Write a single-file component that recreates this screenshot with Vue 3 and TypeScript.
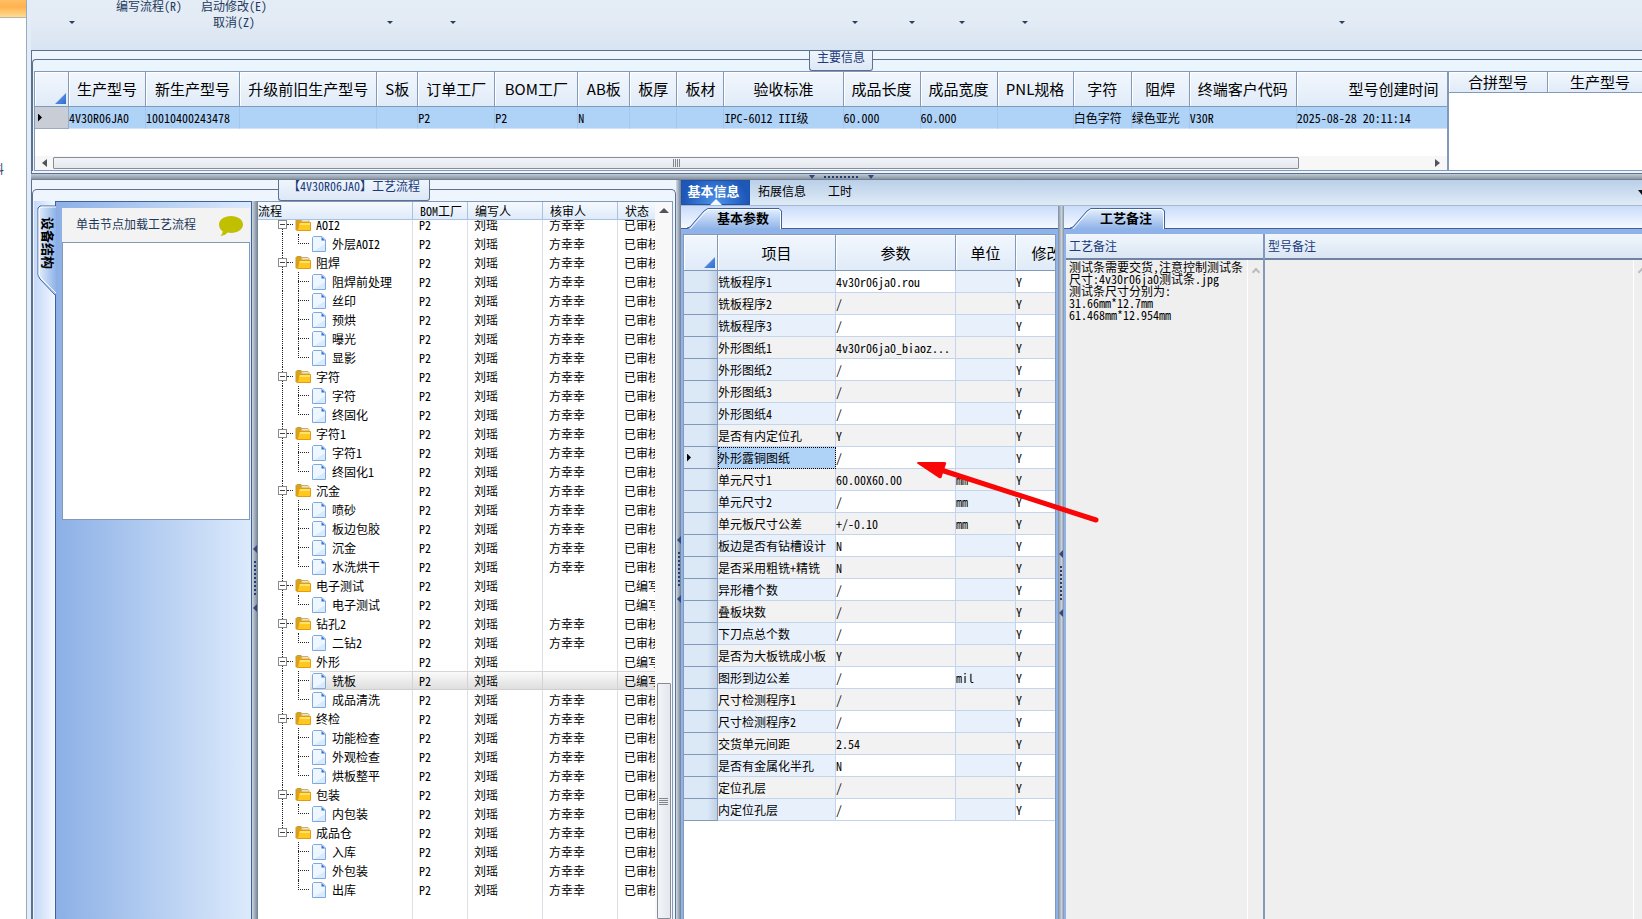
<script setup lang="ts">
interface Column {
  title: string
  width: number
  value?: string
}

interface TreeRow {
  name: string
  level: 0 | 1
  last: boolean
  reviewed: boolean
}

interface Param {
  name: string
  value: string
  unit: string
}

const mainColumns: Column[] = [
  { title: '生产型号', width: 77, value: '4V30R06JA0' },
  { title: '新生产型号', width: 94, value: '10010400243478' },
  { title: '升级前旧生产型号', width: 137 },
  { title: 'S板', width: 41 },
  { title: '订单工厂', width: 77, value: 'P2' },
  { title: 'BOM工厂', width: 83, value: 'P2' },
  { title: 'AB板', width: 52, value: 'N' },
  { title: '板厚', width: 47 },
  { title: '板材', width: 47 },
  { title: '验收标准', width: 119, value: 'IPC-6012 III级' },
  { title: '成品长度', width: 77, value: '60.000' },
  { title: '成品宽度', width: 77, value: '60.000' },
  { title: 'PNL规格', width: 76 },
  { title: '字符', width: 58, value: '白色字符' },
  { title: '阻焊', width: 58, value: '绿色亚光' },
  { title: '终端客户代码', width: 107, value: 'V30R' },
  { title: '型号创建时间', width: 194, value: '2025-08-28 20:11:14' },
]

const groups: [string, string[]][] = [
  ['AOI2', ['外层AOI2']],
  ['阻焊', ['阻焊前处理', '丝印', '预烘', '曝光', '显影']],
  ['字符', ['字符', '终固化']],
  ['字符1', ['字符1', '终固化1']],
  ['沉金', ['喷砂', '板边包胶', '沉金', '水洗烘干']],
  ['电子测试', ['电子测试']],
  ['钻孔2', ['二钻2']],
  ['外形', ['铣板', '成品清洗']],
  ['终检', ['功能检查', '外观检查', '烘板整平']],
  ['包装', ['内包装']],
  ['成品仓', ['入库', '外包装', '出库']],
]
const pending = ['电子测试', '外形', '铣板']

const treeRows: TreeRow[] = groups.flatMap(([name, steps], g) => [
  { name, level: 0 as const, last: g === groups.length - 1, reviewed: !pending.includes(name) },
  ...steps.map((step, i) => ({
    name: step,
    level: 1 as const,
    last: i === steps.length - 1,
    reviewed: !pending.includes(step),
  })),
])
const lastGroupStart = treeRows.length - groups[groups.length - 1][1].length

const params: Param[] = (
  [
    ['铣板程序1', '4v30r06ja0.rou'],
    ['铣板程序2', '/'],
    ['铣板程序3', '/'],
    ['外形图纸1', '4v30r06ja0_biaoz...'],
    ['外形图纸2', '/'],
    ['外形图纸3', '/'],
    ['外形图纸4', '/'],
    ['是否有内定位孔', 'Y'],
    ['外形露铜图纸', '/'],
    ['单元尺寸1', '60.00X60.00', 'mm'],
    ['单元尺寸2', '/', 'mm'],
    ['单元板尺寸公差', '+/-0.10', 'mm'],
    ['板边是否有钻槽设计', 'N'],
    ['是否采用粗铣+精铣', 'N'],
    ['异形槽个数', '/'],
    ['叠板块数', '/'],
    ['下刀点总个数', '/'],
    ['是否为大板铣成小板', 'Y'],
    ['图形到边公差', '/', 'mil'],
    ['尺寸检测程序1', '/'],
    ['尺寸检测程序2', '/'],
    ['交货单元间距', '2.54'],
    ['是否有金属化半孔', 'N'],
    ['定位孔层', '/'],
    ['内定位孔层', '/'],
  ] as string[][]
).map(([name, value, unit = '']) => ({ name, value, unit }))
const currentParam = '外形露铜图纸'

const note = `测试条需要交货,注意控制测试条尺寸:4v30r06ja0测试条.jpg
测试条尺寸分别为:
31.66mm*12.7mm
61.468mm*12.954mm`
</script>

<template>
  <div class="app">
    <aside class="dock">
      <div class="dock-active"></div>
      <span class="dock-label">料</span>
    </aside>

    <div class="main">
      <header class="ribbon">
        <button class="drop" aria-label="展开"><i class="caret"></i></button>
        <button class="cmd">编写流程(R)</button>
        <div class="cmd-stack">
          <button class="cmd">启动修改(E)</button>
          <button class="cmd">取消(Z)</button>
        </div>
        <button v-for="n in 7" :key="n" class="drop" :class="'drop-' + n" aria-label="展开">
          <i class="caret"></i>
        </button>
      </header>

      <section class="info">
        <h2 class="caption">主要信息</h2>
        <div class="info-frame">
          <div class="info-left">
            <table class="grid info-table">
              <colgroup>
                <col class="c-mark" />
                <col v-for="c in mainColumns" :key="c.title" :style="{ width: c.width + 'px' }" />
              </colgroup>
              <thead>
                <tr>
                  <th class="corner"><i></i></th>
                  <th v-for="c in mainColumns" :key="c.title">{{ c.title }}</th>
                </tr>
              </thead>
              <tbody>
                <tr>
                  <td class="mark"><i class="pointer"></i></td>
                  <td v-for="c in mainColumns" :key="c.title">{{ c.value }}</td>
                </tr>
              </tbody>
            </table>
            <div class="hbar">
              <i class="tri tri-left"></i>
              <div class="hthumb"><i class="vgrip"></i></div>
              <i class="tri tri-right"></i>
            </div>
          </div>
          <div class="info-right">
            <table class="grid merge-table">
              <thead>
                <tr>
                  <th>合拼型号</th>
                  <th>生产型号</th>
                </tr>
              </thead>
            </table>
          </div>
        </div>
      </section>

      <div class="hsplit"><i class="down"></i><i class="hdots"></i><i class="down"></i></div>

      <div class="lower">
        <section class="flow">
          <h2 class="caption">【4V30R06JA0】工艺流程</h2>
          <div class="flow-frame">
            <div class="device">
              <div class="device-tabs">
                <button class="vtab">
                  <svg viewBox="0 0 19 91" width="19" height="91" aria-hidden="true">
                    <defs>
                      <linearGradient id="vt" x1="0" x2="1" y1="0" y2="0">
                        <stop offset="0" stop-color="#e4effd" />
                        <stop offset="1" stop-color="#8fb3e8" />
                      </linearGradient>
                    </defs>
                    <path d="M19 1H3L1 3V70L3 74L19 90Z" fill="url(#vt)" />
                    <path d="M19 1H3L1 3V70L3 74L18 90" fill="none" stroke="#3f619c" />
                    <path d="M19 2H4L2 4V70L4 73L19 88" fill="none" stroke="#fff" />
                  </svg>
                  <span>设备结构</span>
                </button>
              </div>
              <div class="device-body">
                <div class="hint">
                  <span>单击节点加载工艺流程</span>
                  <svg viewBox="0 0 26 22" width="26" height="22" aria-hidden="true">
                    <path
                      d="M13 1C20 1 25 5 25 9.500S20 18 13 18C11.800 18 10.800 17.900 9.800 17.600C8 19.400 5.500 21 2.500 21C4 19.500 4.500 18 4.700 16.300C2.300 14.700 1 12.500 1 9.500C1 5 6 1 13 1Z"
                      fill="#c0c000"
                    />
                  </svg>
                </div>
                <div class="device-list"></div>
              </div>
            </div>

            <div class="vsplit vsplit-a"><i class="left"></i><i class="vdots"></i><i class="left"></i></div>

            <div class="tree">
              <div class="tree-view">
                <table class="tree-head">
                  <colgroup>
                    <col class="t1" /><col class="t2" /><col class="t3" /><col class="t3" /><col class="t3" />
                  </colgroup>
                  <thead>
                    <tr>
                      <th>流程</th>
                      <th>BOM工厂</th>
                      <th>编写人</th>
                      <th>核审人</th>
                      <th>状态</th>
                    </tr>
                  </thead>
                </table>
                <div class="tree-scroll">
                  <table class="tree-body">
                    <colgroup>
                      <col class="t1" /><col class="t2" /><col class="t3" /><col class="t3" /><col class="t3" />
                    </colgroup>
                    <tbody>
                      <tr v-for="(r, i) in treeRows" :key="i" :class="{ selected: r.name === '铣板' }">
                        <td>
                          <div class="node">
                            <span
                              class="rail"
                              :class="{ half: i === lastGroupStart - 1, none: i >= lastGroupStart }"
                            ></span>
                            <template v-if="r.level === 0">
                              <button class="toggle" aria-label="折叠"></button>
                              <span class="stub"></span>
                              <svg class="folder" viewBox="0 0 17 15" width="17" height="15" aria-hidden="true">
                                <path d="M1 2.500L2 1.500H6L7 2.500H12V13H1Z" fill="#d9a21b" stroke="#c99a3a" />
                                <path d="M7 2.500H13L14 3.500V5H6Z" fill="#f3e3b5" stroke="#c9b070" />
                                <path d="M4 5.500H15.500V13.500H2.500Z" fill="#ffc81e" stroke="#e79a10" />
                                <path d="M5 7H15" stroke="#ffe46b" stroke-width="2" />
                              </svg>
                            </template>
                            <template v-else>
                              <span class="branch" :class="{ end: r.last }"></span>
                              <svg class="doc" viewBox="0 0 14 16" width="14" height="16" aria-hidden="true">
                                <path d="M1.500 .5H10L13.500 4V15.500H.5V1.500Z" fill="#eef6ff" stroke="#7fa9de" />
                                <path d="M2 15L13 8V15Z" fill="#d8eafd" />
                                <path d="M9.500 1V4.500H13Z" fill="#2f6fd6" />
                              </svg>
                            </template>
                            <span class="label">{{ r.name }}</span>
                          </div>
                        </td>
                        <td>P2</td>
                        <td>刘瑶</td>
                        <td>{{ r.reviewed ? '方幸幸' : '' }}</td>
                        <td>{{ r.reviewed ? '已审核' : '已编写' }}</td>
                      </tr>
                      <tr class="filler"><td></td><td></td><td></td><td></td><td></td></tr>
                    </tbody>
                  </table>
                </div>
              </div>
              <div class="vbar">
                <i class="tri tri-up"></i>
                <div class="vthumb"><i class="hgrip"></i></div>
              </div>
            </div>
          </div>
        </section>

        <div class="vsplit vsplit-b"><i class="left"></i><i class="vdots"></i><i class="left"></i></div>

        <section class="detail">
          <nav class="tabs">
            <button class="active">基本信息</button>
            <button>拓展信息</button>
            <button>工时</button>
            <i class="more"></i>
          </nav>
          <div class="panes">
            <div class="pane pane-params">
              <div class="strip">
                <button class="tab">
                  <svg viewBox="0 0 96 21" width="96" height="21" aria-hidden="true">
                    <defs>
                      <linearGradient id="ht" x1="0" x2="0" y1="0" y2="1">
                        <stop offset="0" stop-color="#e4effd" />
                        <stop offset="1" stop-color="#8fb3e8" />
                      </linearGradient>
                    </defs>
                    <path d="M1 21L17 3L21 1H92L94 3V21Z" fill="url(#ht)" />
                    <path d="M0 20L3 19L17 3L21 .5H92L94.500 3V20" fill="none" stroke="#3f619c" />
                    <path d="M3 21L18 4L21 1.500H91L93.500 4V21" fill="none" stroke="#fff" />
                  </svg>
                  <span>基本参数</span>
                </button>
              </div>
              <div class="param-view">
                <table class="grid param-table">
                  <colgroup>
                    <col class="p0" /><col class="p1" /><col class="p2" /><col class="p3" /><col class="p4" />
                  </colgroup>
                  <thead>
                    <tr>
                      <th class="corner"><i></i></th>
                      <th>项目</th>
                      <th>参数</th>
                      <th>单位</th>
                      <th>修改</th>
                    </tr>
                  </thead>
                  <tbody>
                    <tr v-for="p in params" :key="p.name" :class="{ current: p.name === currentParam }">
                      <td class="mark"><i v-if="p.name === currentParam" class="pointer"></i></td>
                      <td class="fixed">{{ p.name }}</td>
                      <td>{{ p.value }}</td>
                      <td class="fixed">{{ p.unit }}</td>
                      <td>Y</td>
                    </tr>
                  </tbody>
                </table>
              </div>
            </div>

            <div class="vsplit vsplit-c"><i class="left"></i><i class="vdots"></i><i class="left"></i></div>

            <div class="pane pane-notes">
              <div class="strip">
                <button class="tab">
                  <svg viewBox="0 0 96 21" width="96" height="21" aria-hidden="true">
                    <path d="M1 21L17 3L21 1H92L94 3V21Z" fill="url(#ht)" />
                    <path d="M0 20L3 19L17 3L21 .5H92L94.500 3V20" fill="none" stroke="#3f619c" />
                    <path d="M3 21L18 4L21 1.500H91L93.500 4V21" fill="none" stroke="#fff" />
                  </svg>
                  <span>工艺备注</span>
                </button>
              </div>
              <div class="notes">
                <div class="note note-process">
                  <label for="process-note">工艺备注</label>
                  <div class="note-box">
                    <textarea id="process-note" readonly :value="note"></textarea>
                    <span class="note-bar"><i></i></span>
                  </div>
                </div>
                <div class="note note-model">
                  <label for="model-note">型号备注</label>
                  <div class="note-box">
                    <textarea id="model-note" readonly></textarea>
                    <span class="note-bar"><i></i></span>
                  </div>
                </div>
              </div>
            </div>
          </div>
        </section>
      </div>
    </div>

    <svg class="arrow" viewBox="0 0 186 66" width="186" height="66" aria-hidden="true">
      <path d="M26 10L181 60" stroke="#f90606" stroke-width="5" stroke-linecap="round" />
      <path d="M3 2Q1 3 3 4L24 18Q27 19 27 16L31 4Q32 2 29 2Z" fill="#f90606" />
    </svg>
  </div>
</template>

<style>
body {
  margin: 0;
  overflow: hidden;
}
</style>

<style scoped>
.app {
  position: relative;
  display: flex;
  height: 100vh;
  overflow: hidden;
  background: #fff;
  color: #000;
  font: 12px/14px 'Noto Sans Mono CJK SC', 'Noto Sans CJK SC', sans-serif;
}
.app *,
.app *::before,
.app *::after {
  box-sizing: border-box;
}
button {
  margin: 0;
  padding: 0;
  border: 0;
  background: none;
  color: inherit;
  font: inherit;
  white-space: nowrap;
}
i {
  display: block;
  flex: none;
}
table {
  border-collapse: separate;
  border-spacing: 0;
  table-layout: fixed;
}
th,
td {
  padding: 0;
  overflow: hidden;
  white-space: nowrap;
  text-align: left;
  font-weight: 400;
}

.dock {
  flex: none;
  width: 31px;
  overflow: hidden;
  border-right: 4px solid #e3edf8;
  box-shadow: inset -1px 0 #9aaac0;
}
.dock-active {
  width: 26px;
  height: 18px;
  border-bottom: 1px solid #b9b3a8;
  background: linear-gradient(#ffbf66, #ffb24d 40%, #ffdc92);
}
.dock-label {
  display: block;
  width: 4px;
  margin-top: 144px;
  direction: rtl;
  overflow: hidden;
  color: #1e395b;
}
.main {
  display: flex;
  flex: 1;
  flex-direction: column;
  min-width: 0;
}

.ribbon {
  display: flex;
  flex: none;
  height: 50px;
  color: #1e395b;
  background: linear-gradient(#e4ecf6, #e3ebf5 40%, #d7e4f1);
}
.ribbon .drop {
  display: flex;
  justify-content: center;
  flex: none;
  width: 40px;
  height: 24px;
  padding-top: 21px;
  margin-left: 21px;
}
.caret {
  border: 3px solid transparent;
  border-top-color: #2a3f5f;
  border-bottom: 0;
}
.cmd {
  display: block;
  flex: none;
  height: 12px;
  line-height: 12px;
}
.ribbon > .cmd {
  margin-left: 24px;
}
.cmd-stack {
  flex: none;
  display: flex;
  flex-direction: column;
  align-items: center;
  gap: 4px;
  width: 66px;
  margin: 0 82px 0 19px;
}
.ribbon .drop-2 { margin-left: 23px; }
.ribbon .drop-3 { margin-left: 362px; }
.ribbon .drop-4 { margin-left: 17px; }
.ribbon .drop-5 { margin-left: 10px; }
.ribbon .drop-6 { margin-left: 23px; }
.ribbon .drop-7 { margin-left: 277px; }

.caption {
  position: absolute;
  top: 0;
  left: 50%;
  margin: 0;
  height: 20px;
  padding: 0 7px;
  transform: translateX(-50%);
  border: 1px solid #5d708f;
  border-top: 0;
  border-radius: 0 0 3px 3px;
  background: linear-gradient(#eef5fd, #dde8f5);
  color: #20397a;
  font-size: 12px;
  font-weight: 400;
  line-height: 12px;
  white-space: nowrap;
}
.info {
  position: relative;
  flex: none;
  width: calc(100% + 9px);
  height: 124px;
  padding-top: 8px;
  border: 1px solid #5d708f;
  background: #eef5fd;
}
.info-frame {
  display: flex;
  height: 112px;
  padding: 11px 0 0 1px;
  border: 1px solid #5d708f;
  border-right: 0;
  border-bottom: 0;
  border-radius: 4px 0 0 0;
  background: #ebf5fd;
}
.info-left {
  flex: none;
  width: 1415px;
  height: 100px;
  overflow: hidden;
  display: flex;
  flex-direction: column;
  border: 1px solid #8299b9;
  border-right-width: 2px;
  background: #fff;
}
.info-right {
  flex: 1;
  overflow: hidden;
  border: 1px solid #8299b9;
  border-left: 0;
  background: #fff;
}
.grid th {
  height: 35px;
  border-right: 1px solid #8299b9;
  border-bottom: 1px solid #8299b9;
  background: linear-gradient(#f2f7fd, #e0ebf8);
  box-shadow: inset 1px 1px #fff;
  font-family: 'Noto Sans CJK SC', sans-serif;
  font-size: 15px;
  text-align: center;
}
.grid th.corner {
  vertical-align: bottom;
}
.corner i {
  width: 11px;
  height: 11px;
  margin: 0 2px 2px auto;
  background: linear-gradient(135deg, #6fa0ea, #2f6fd0);
  clip-path: polygon(100% 0, 100% 100%, 0 100%);
}
.pointer {
  margin-left: 3px;
  width: 4px;
  height: 8px;
  background: #000;
  clip-path: polygon(0 0, 100% 50%, 0 100%);
}
.info-table {
  flex: none;
  width: 1456px;
}
.c-mark {
  width: 34px;
}
.info-table td {
  height: 22px;
  border-right: 1px solid #a3c6ee;
  border-bottom: 1px solid #d3e3f5;
  background: #afd2f7;
}
.info-table td.mark {
  border-color: #9aabc2;
  background: #c9ced6;
}
.merge-table {
  width: 204px;
}
.merge-table th {
  height: 21px;
  line-height: 20px;
}
.merge-table th:first-child {
  width: 99px;
}
.hbar {
  display: flex;
  align-items: center;
  flex: none;
  height: 14px;
  margin-top: auto;
  padding: 0 7px 1px;
  background: #f7f7f7;
}
.tri {
  border: 4px solid transparent;
}
.tri-left {
  border-right: 5px solid #50555c;
  border-left: 0;
}
.tri-right {
  margin-left: auto;
  border-left: 5px solid #50555c;
  border-right: 0;
}
.tri-up {
  border-width: 0 5px 5px;
  border-bottom-color: #50555c;
}
.hthumb {
  display: flex;
  align-items: center;
  width: 1246px;
  height: 12px;
  margin-left: 6px;
  border: 1px solid #878d96;
  border-radius: 1px;
  background: linear-gradient(#f2f4f7, #e3e8ee);
}
.vgrip {
  width: 7px;
  height: 8px;
  margin: 0 auto;
  background: repeating-linear-gradient(90deg, #80868e 0 1px, transparent 1px 2px);
}

.hsplit {
  display: flex;
  align-items: center;
  gap: 9px;
  flex: none;
  height: 6px;
  padding-left: 778px;
  border-bottom: 1px solid #76818e;
  background: linear-gradient(#c2cbd6, #8794a3);
}
.down {
  border: 3px solid transparent;
  border-top: 4px solid #34497a;
  border-bottom: 0;
}
.hdots {
  width: 35px;
  height: 2px;
  background: repeating-linear-gradient(90deg, #263c73 0 2px, transparent 2px 4px);
}
.lower {
  display: flex;
  flex: 1;
  min-height: 0;
}

.flow {
  position: relative;
  display: flex;
  flex: none;
  width: 645px;
  padding-top: 9px;
  border-left: 1px solid #5d708f;
  background: #eef5fd;
}
.flow .caption {
  height: 21px;
  padding: 0 9px;
}
.flow-frame {
  display: flex;
  width: 100%;
  min-height: 0;
  padding: 11px 2px 0 1px;
  border: 1px solid #5d708f;
  border-bottom: 0;
  border-radius: 5px 5px 0 0;
}
.device {
  display: flex;
  flex: none;
  width: 218px;
  border-right: 1px solid #3f619c;
}
.device-tabs {
  flex: none;
  width: 21px;
  padding: 4px 0 0 3px;
  background: linear-gradient(90deg, #c5d9f8, #f1f7ff);
}
.vtab {
  position: relative;
  display: flex;
  align-items: flex-start;
  justify-content: center;
  width: 19px;
  height: 91px;
  padding: 12px 0 0 3px;
}
.vtab svg {
  position: absolute;
  inset: 0;
}
.vtab span {
  position: relative;
  writing-mode: vertical-rl;
  text-orientation: sideways;
  font-size: 13px;
  font-weight: 700;
  line-height: 14px;
}
.device-body {
  flex: 1;
  padding: 6px 1px 0 6px;
  border-top: 1px solid #3f619c;
  border-left: 1px solid #3f619c;
  background: linear-gradient(90deg, #8cb0e6, #dceafc);
}
.hint {
  display: flex;
  align-items: center;
  justify-content: space-between;
  height: 34px;
  padding: 0 6px 2px 14px;
  background: #f3f3f3;
  color: #1e395b;
}
.hint svg {
  margin-top: 4px;
}
.device-list {
  height: 278px;
  border: 1px solid #8299b9;
  background: #fff;
}

.vsplit {
  display: flex;
  flex: none;
  flex-direction: column;
  align-items: center;
  gap: 8px;
}
.vsplit-a {
  width: 6px;
  padding-top: 344px;
  background: linear-gradient(90deg, #cdd6e0, #6f7f92);
}
.vsplit-b {
  width: 5px;
  padding-top: 356px;
  background: linear-gradient(90deg, #d3dbe4, #6f7f92);
}
.vsplit-c {
  width: 6px;
  padding-top: 344px;
  background: linear-gradient(90deg, #7f8d9e, #c9d2dd 60%, #7f8d9e);
}
.left {
  border: 4px solid transparent;
  border-right: 4px solid #34497a;
  border-left: 0;
}
.vdots {
  width: 2px;
  height: 35px;
  background: repeating-linear-gradient(#263c73 0 2px, transparent 2px 4px);
}

.tree {
  display: flex;
  flex: 1;
  min-width: 0;
  border: 1px solid #8299b9;
  border-width: 1px 1px 0 0;
  background: #fff;
}
.tree-view {
  display: flex;
  flex-direction: column;
  flex: 1;
  min-width: 0;
  overflow: hidden;
}
.tree-head,
.tree-body {
  flex: none;
  width: 435px;
}
.t1 { width: 155px; }
.t2 { width: 55px; }
.t3 { width: 75px; }
.tree-head th {
  height: 18px;
  padding-left: 7px;
  border-right: 1px solid #a9c2e2;
  border-bottom: 1px solid #a9c2e2;
  background: linear-gradient(#f5f9fe, #dfebf9);
  line-height: 12px;
}
.tree-head th:first-child {
  padding: 0;
}
.tree-scroll {
  flex: 1;
  min-height: 0;
  overflow: hidden;
}
.tree-body {
  margin-top: -5px;
}
.tree-body td {
  height: 19px;
  padding-left: 6px;
  border-right: 1px solid #dcdfe4;
}
.tree-body td:first-child {
  padding: 0;
}
.tree-body .selected td {
  border-right-color: #d4d4d4;
  background: linear-gradient(#d6d6d6 0 1px, #fafafa 1px, #dedede 18px, #cfcfcf 18px);
}
.tree-body .selected td:first-child {
  background-position: 52px 0;
  background-repeat: no-repeat;
}
.tree-body .filler td {
  height: 60px;
}
.node {
  position: relative;
  display: flex;
  align-items: center;
  height: 19px;
  padding-left: 20px;
}
.rail {
  position: absolute;
  top: 0;
  left: 24px;
  height: 19px;
  border-left: 1px dotted #222;
}
.rail.half { height: 9px; }
.rail.none { display: none; }
.toggle {
  position: relative;
  flex: none;
  width: 9px;
  height: 9px;
  border: 1px solid #8a8a8a;
  background: linear-gradient(#444, #444) center / 5px 1px no-repeat #fff;
}
.stub {
  width: 6px;
  margin-right: 2px;
  border-top: 1px dotted #222;
}
.folder {
  flex: none;
  margin-right: 4px;
}
.branch {
  position: relative;
  flex: none;
  align-self: stretch;
  width: 11px;
  margin: 0 3px 0 20px;
  background: repeating-linear-gradient(90deg, #222 0 1px, transparent 1px 2px) 0 9px / 100% 1px no-repeat;
}
.branch::before {
  content: '';
  position: absolute;
  top: 0;
  bottom: 0;
  left: 0;
  border-left: 1px dotted #222;
}
.branch.end::before {
  bottom: 9px;
}
.doc {
  flex: none;
  margin-right: 6px;
}
.vbar {
  display: flex;
  flex-direction: column;
  align-items: center;
  flex: none;
  width: 17px;
  padding-top: 6px;
  background: #f8f8f8;
}
.vthumb {
  display: flex;
  align-items: center;
  width: 14px;
  flex: 1;
  margin-top: 470px;
  border: 1px solid #878d96;
  border-radius: 1px;
  background: linear-gradient(90deg, #f2f4f7, #e3e8ee);
}
.hgrip {
  width: 9px;
  height: 7px;
  margin: 0 auto;
  background: repeating-linear-gradient(#80868e 0 1px, transparent 1px 2px);
}

.detail {
  display: flex;
  flex: 1;
  flex-direction: column;
  min-width: 0;
}
.tabs {
  display: flex;
  flex: none;
  height: 26px;
  border-bottom: 1px solid #a9b9ca;
  background: linear-gradient(#b9cfe8, #e0ebf7);
}
.tabs button {
  padding-bottom: 3px;
  margin-right: 22px;
}
.tabs .active {
  position: relative;
  width: 69px;
  padding-right: 4px;
  margin-right: 8px;
  border: 1px solid #1f52a8;
  background: radial-gradient(circle at 50% 100%, #4f94ea, #1d57b8 80%);
  color: #fff;
  font-size: 13px;
  font-weight: 700;
}
.tabs .active::after {
  content: '';
  position: absolute;
  bottom: -1px;
  left: 50%;
  border: 6px solid transparent;
  border-top: 0;
  border-bottom-color: #f2f8ff;
  transform: translateX(-50%);
}
.more {
  margin: 10px -4px 0 auto;
  border: 4px solid transparent;
  border-top: 5px solid #111;
  border-bottom: 0;
  height: 5px;
}
.panes {
  display: flex;
  flex: 1;
  min-height: 0;
}
.pane {
  display: flex;
  flex-direction: column;
  min-width: 0;
  background: #8fb3e8;
}
.pane-params {
  flex: none;
  width: 377px;
}
.pane-notes {
  flex: 1;
}
.strip {
  flex: none;
  height: 23px;
  padding: 2px 0 0 6px;
  border-bottom: 1px solid #3f619c;
  background: linear-gradient(#c9dcfb, #f5f9ff);
}
.tab {
  position: relative;
  display: block;
  width: 96px;
  height: 21px;
  padding-bottom: 2px;
  font-size: 13px;
  font-weight: 700;
  text-align: left;
}
.tab svg {
  position: absolute;
  top: 0;
  left: 0;
}
.tab span {
  position: relative;
  padding-left: 30px;
}
.param-view {
  flex: 1;
  min-height: 0;
  margin: 5px 2px 0 2px;
  overflow: hidden;
  border: 1px solid #8299b9;
  border-bottom: 0;
  background: #fff;
}
.param-table {
  width: 394px;
}
.p0 { width: 34px; }
.p1 { width: 118px; }
.p2 { width: 120px; }
.p3 { width: 60px; }
.p4 { width: 62px; }
.param-table th {
  height: 36px;
}
.param-table td {
  height: 22px;
  border-right: 1px solid #c3d5ec;
  border-bottom: 1px solid #c3d5ec;
  background: #fff;
}
.param-table td.fixed {
  background: #e8f1fb;
}
.param-table tr:nth-child(even) td {
  background: #f2f2f2;
}
.param-table tr td.mark {
  border-color: #8299b9;
  background: linear-gradient(90deg, #dbe8f6 70%, #c0cfe3);
}
.param-table tr.current td:nth-child(2) {
  background: #afd2f7;
  outline: 1px dotted #000;
  outline-offset: -1px;
}

.notes {
  display: flex;
  flex: 1;
  min-height: 0;
  margin: 5px 0 0 2px;
}
.note {
  display: flex;
  flex-direction: column;
}
.note-process {
  flex: none;
  width: 199px;
  border-right: 2px solid #8299b9;
}
.note-model {
  flex: 1;
}
.note label {
  flex: none;
  height: 26px;
  padding-left: 3px;
  border-bottom: 2px solid #6f84a4;
  background: linear-gradient(#f1f6fc, #d9e6f3);
  color: #20397a;
  line-height: 24px;
}
.note-box {
  display: flex;
  flex: 1;
  min-height: 0;
  background: #efefef;
}
textarea {
  flex: 1;
  min-width: 0;
  margin: 0;
  padding: 1px 0 0 3px;
  border: 0;
  outline: 0;
  overflow: hidden;
  resize: none;
  background: transparent;
  color: #000;
  font: inherit;
  line-height: 12px;
  word-break: break-all;
}
.note-bar {
  flex: none;
  width: 16px;
  padding: 9px 0 0 5px;
  border-left: 1px solid #fff;
}
.note-model .note-bar {
  width: 9px;
}
.note-bar i {
  width: 6px;
  height: 6px;
  border: 2px solid #bcbcbc;
  border-width: 2px 0 0 2px;
  transform: rotate(45deg);
}
.arrow {
  position: absolute;
  top: 460px;
  left: 915px;
  fill: none;
  pointer-events: none;
}
</style>
